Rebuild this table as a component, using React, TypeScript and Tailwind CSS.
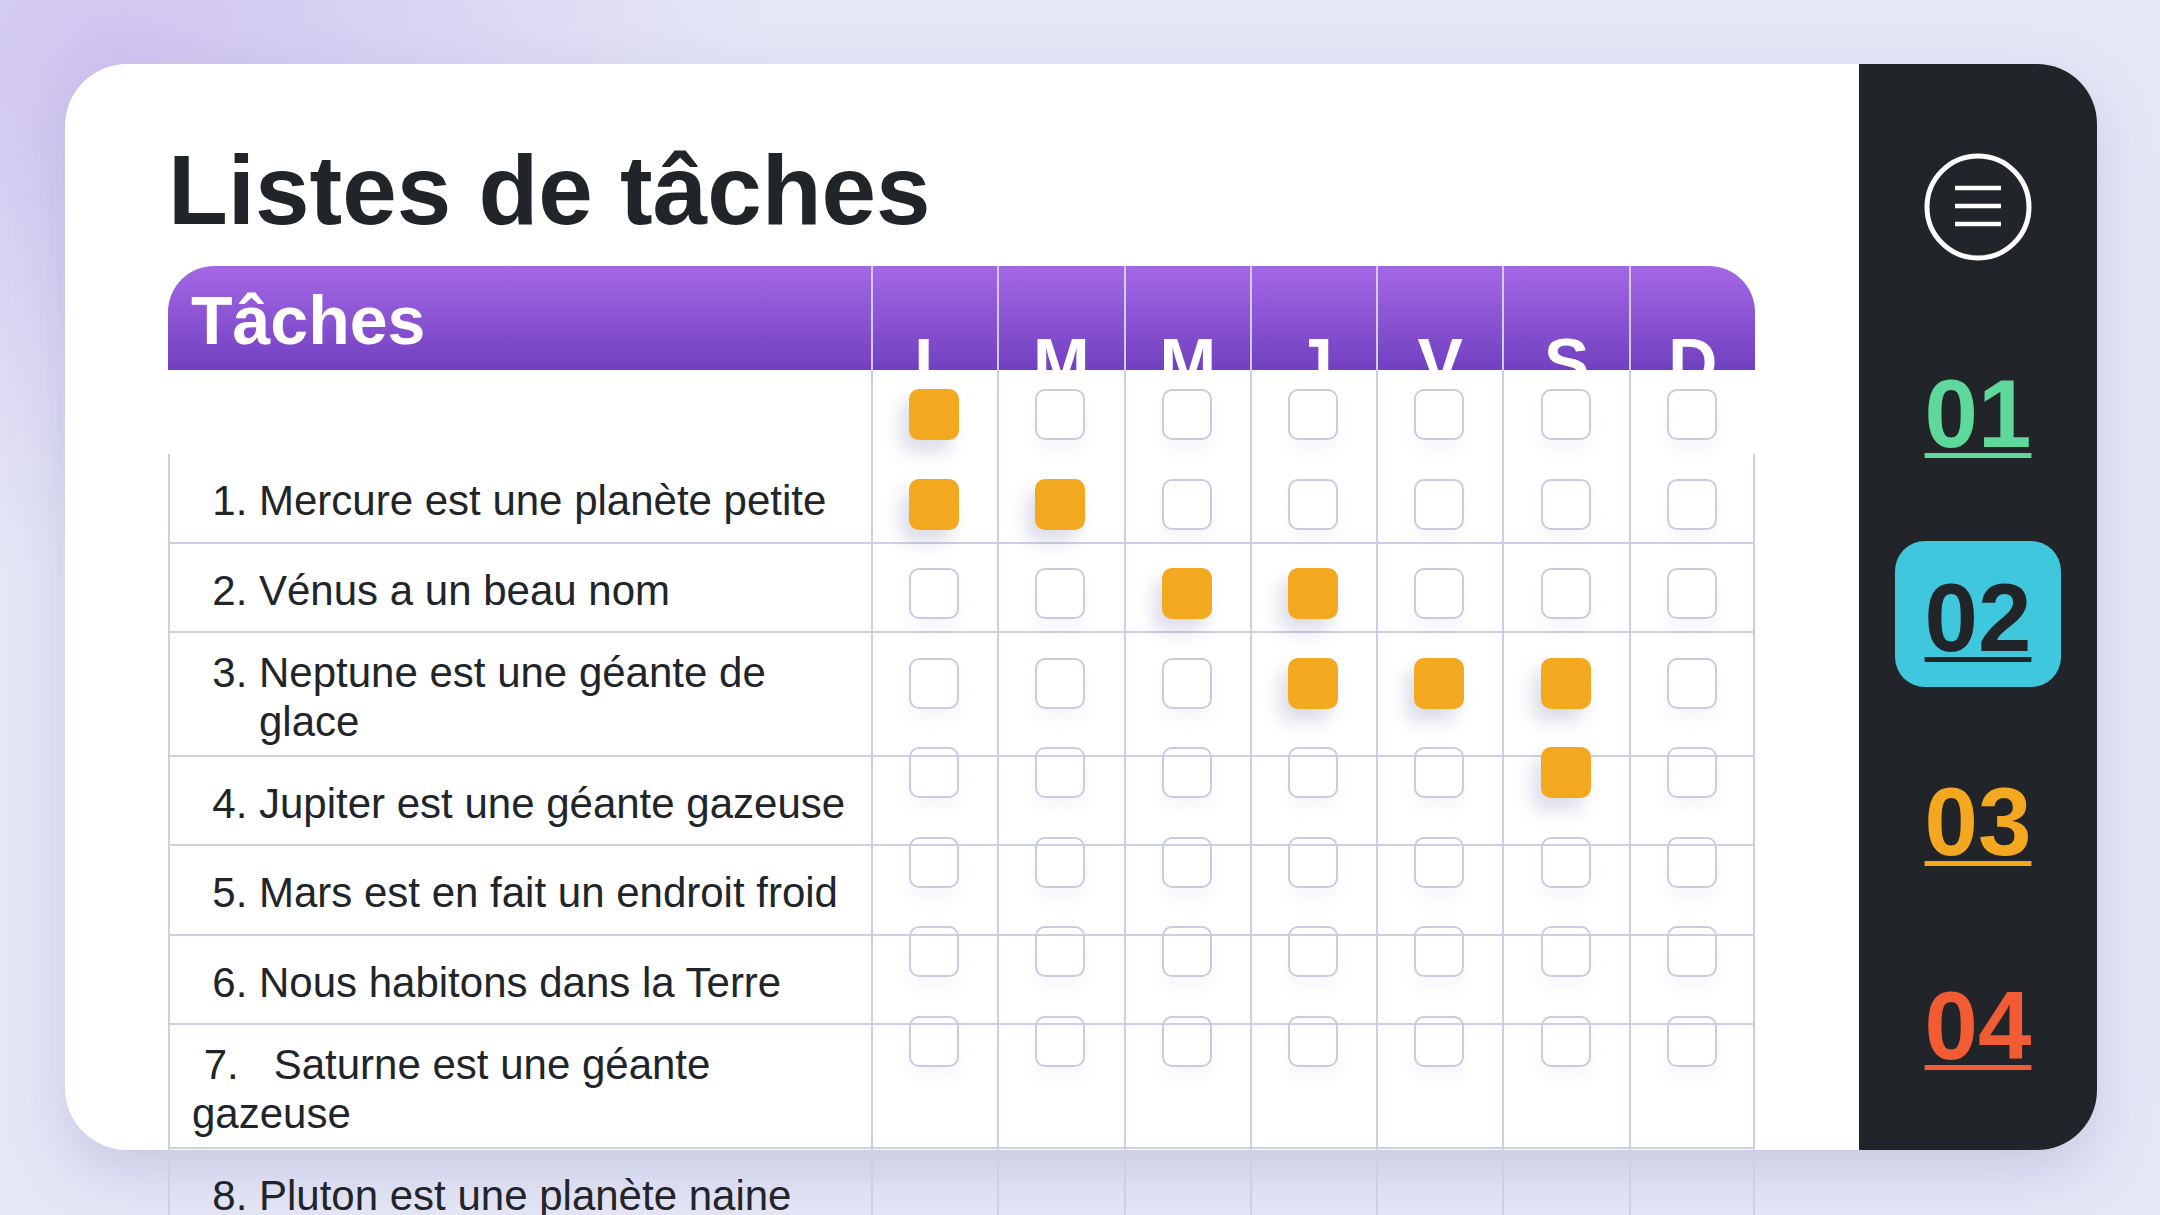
import React from 'react';

const days = ['L', 'M', 'M', 'J', 'V', 'S', 'D'];

type Task = { n: number; text: string; plain?: boolean };

const tasks: Task[] = [
  { n: 1, text: 'Mercure est une planète petite' },
  { n: 2, text: 'Vénus a un beau nom' },
  { n: 3, text: 'Neptune est une géante de glace' },
  { n: 4, text: 'Jupiter est une géante gazeuse' },
  { n: 5, text: 'Mars est en fait un endroit froid' },
  { n: 6, text: 'Nous habitons dans la Terre' },
  { n: 7, text: '\u00a07.\u00a0\u00a0 Saturne est une géante gazeuse', plain: true },
  { n: 8, text: 'Pluton est une planète naine' },
];

// which days are ticked, per checkbox slot
const checked: number[][] = [[0], [0, 1], [2, 3], [3, 4, 5], [5], [], [], []];

const nav = [
  { label: '01', cls: 'text-[#5fd89b]' },
  { label: '02', cls: 'text-[#212429] bg-[#3fc8dd] rounded-[30px]' },
  { label: '03', cls: 'text-[#f4a81f]' },
  { label: '04', cls: 'text-[#f15c35]' },
];

const Checkbox = ({ on }: { on: boolean }) =>
  on ? (
    <span className="block h-[51px] w-[50px] rounded-[10px] bg-[#f2a91f] shadow-[-8px_12px_18px_rgba(90,95,150,0.22)]" />
  ) : (
    <span className="block h-[51px] w-[50px] rounded-[10px] border-2 border-[#c9cce0] shadow-[0_10px_14px_rgba(140,145,190,0.07)]" />
  );

const App: React.FC = () => {
  return (
    <div className="h-screen w-full overflow-hidden bg-[#e5e7f6] bg-[radial-gradient(ellipse_650px_520px_at_120px_60px,#d0c4f0_0%,#e5e7f6_100%)] font-['Liberation_Sans',Arial,sans-serif]">
      <div className="pl-[65px] pt-[64px]">
        <div className="flex h-[1086px] w-[2032px] rounded-[62px] bg-white shadow-[0_22px_55px_rgba(110,115,175,0.25)]">
          {/* main */}
          <div className="min-w-0 flex-1 pl-[103px] pt-[77px]">
            <h1 className="text-[98px] font-bold leading-none text-[#212529]">Listes de tâches</h1>

            <div className="mt-[27px] w-[1587px]">
              {/* header */}
              <div className="grid h-[104px] grid-cols-[703px_repeat(7,minmax(0,1fr))] overflow-hidden rounded-t-[46px] bg-[linear-gradient(180deg,#a468e6,#7140c0)] text-[68px] font-bold leading-none text-white">
                <div className="pl-[23px] pt-[20px]">Tâches</div>
                {days.map((d, i) => (
                  <div key={i} className="border-l-2 border-[#cfcbea] pt-[62px] text-center">
                    {d}
                  </div>
                ))}
              </div>

              {/* body */}
              <div className="relative">
                <div className="grid h-[84px] grid-cols-[703px_repeat(7,minmax(0,1fr))]">
                  <div />
                  {days.map((_, i) => (
                    <div key={i} className="border-l-2 border-[#cdd0e4]" />
                  ))}
                </div>

                {tasks.map((t) => (
                  <div
                    key={t.n}
                    className="grid min-h-[89.5px] grid-cols-[703px_repeat(7,minmax(0,1fr))] border-b-2 border-[#cdd0e4]"
                  >
                    <div className="flex items-center border-l-2 border-[#cdd0e4] pb-[8px] pr-[12px] pt-[14.5px] text-[42px] leading-[49.5px] text-[#212529]">
                      {t.plain ? (
                        <p className="w-full pl-[22px]">{t.text}</p>
                      ) : (
                        <ol start={t.n} className="w-full list-decimal pl-[89px]">
                          <li>{t.text}</li>
                        </ol>
                      )}
                    </div>
                    {days.map((_, i) => (
                      <div
                        key={i}
                        className={
                          i === 6
                            ? 'border-l-2 border-r-2 border-[#cdd0e4]'
                            : 'border-l-2 border-[#cdd0e4]'
                        }
                      />
                    ))}
                  </div>
                ))}

                {/* checkboxes sit over the row lines */}
                <div className="absolute left-[703px] right-0 top-0 grid grid-cols-7">
                  {days.map((_, di) => (
                    <div key={di} className="flex flex-col">
                      {checked.map((row, si) => (
                        <div key={si} className="flex h-[89.5px] items-center justify-center">
                          <Checkbox on={row.includes(di)} />
                        </div>
                      ))}
                    </div>
                  ))}
                </div>
              </div>
            </div>
          </div>

          {/* sidebar */}
          <div className="flex w-[238px] shrink-0 flex-col items-center gap-[58px] rounded-r-[60px] bg-[#212429] pt-[89px]">
            <svg width="108" height="108" viewBox="0 0 108 108" className="mb-[18px]">
              <circle cx="54" cy="54" r="51" fill="none" stroke="white" strokeWidth="5" />
              <path d="M31 35H77M31 53H77M31 71H77" stroke="white" strokeWidth="4.5" />
            </svg>
            {nav.map((n) => (
              <div
                key={n.label}
                className={`flex h-[146px] w-[166px] items-center justify-center pt-[7px] text-[96px] font-bold leading-none ${n.cls}`}
              >
                <span className="underline decoration-[5px] underline-offset-[6px]">{n.label}</span>
              </div>
            ))}
          </div>
        </div>
      </div>
    </div>
  );
};

export default App;
